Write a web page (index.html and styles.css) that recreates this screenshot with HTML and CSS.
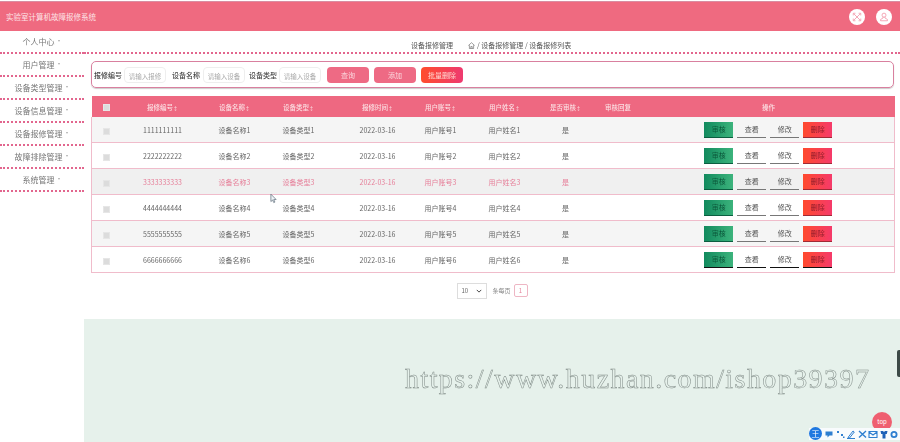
FILE: index.html
```html
<!DOCTYPE html>
<html lang="zh">
<head>
<meta charset="utf-8">
<title>实验室计算机故障报修系统</title>
<link rel="stylesheet" href="styles.css">
</head>
<body>
<div class="page">
  <header class="topbar">
    <div class="brand">实验室计算机故障报修系统</div>
    <div class="top-icons">
      <span class="round-icon"><svg viewBox="0 0 16 16" width="10" height="10"><path d="M3 3l10 10M13 3L3 13M2 5.500V2h3.500M10.500 2H14v3.500M14 10.500V14h-3.500M5.500 14H2v-3.500" fill="none" stroke="#f08ea0" stroke-width="1.200"/></svg></span>
      <span class="round-icon"><svg viewBox="0 0 16 16" width="10" height="10"><circle cx="8" cy="5" r="3.200" fill="none" stroke="#f08ea0" stroke-width="1.200"/><path d="M6.500 8v1.500L2.500 12v2h11v-2l-4-2.500V8" fill="none" stroke="#f08ea0" stroke-width="1.200"/></svg></span>
    </div>
  </header>
  <div class="layout">
    <nav class="sidebar">
      <a class="nav-item">个人中心<i class="caret"></i></a>
      <a class="nav-item">用户管理<i class="caret"></i></a>
      <a class="nav-item">设备类型管理<i class="caret"></i></a>
      <a class="nav-item">设备信息管理<i class="caret"></i></a>
      <a class="nav-item">设备报修管理<i class="caret"></i></a>
      <a class="nav-item">故障排除管理<i class="caret"></i></a>
      <a class="nav-item">系统管理<i class="caret"></i></a>
    </nav>
    <main class="main">
      <div class="crumbs">
        <span class="crumb-title">设备报修管理</span>
        <svg class="home" viewBox="0 0 10 10" width="7" height="7"><path d="M.5 5L5 1l4.500 4M2 4.500V9.500h6V4.500M4 9.500V6.500h2v3" fill="none" stroke="#555" stroke-width=".8"/></svg>
        <span class="crumb-path">/ 设备报修管理 / 设备报修列表</span>
      </div>
      <div class="content">
        <form class="search">
          <label class="search-label">报修编号</label>
          <span class="input">请输入报修</span>
          <label class="search-label label-wide">设备名称</label>
          <span class="input input-tight">请输入设备</span>
          <label class="search-label">设备类型</label>
          <span class="input">请输入设备</span>
          <span class="btn">查询</span>
          <span class="btn">添加</span>
          <span class="btn btn-danger">批量删除</span>
        </form>
        <table class="grid">
          <colgroup>
            <col class="c1"><col class="c2"><col class="c3"><col class="c4"><col class="c5"><col class="c2"><col class="c7"><col class="c8"><col class="c9"><col class="c10">
          </colgroup>
          <thead>
            <tr>
              <th><i class="check"></i></th>
              <th>报修编号<b>↕</b></th><th>设备名称<b>↕</b></th><th>设备类型<b>↕</b></th><th>报修时间<b>↕</b></th><th>用户账号<b>↕</b></th><th>用户姓名<b>↕</b></th><th>是否审核<b>↕</b></th><th>审核回复</th><th>操作</th>
            </tr>
          </thead>
          <tbody>
            <tr><td><i class="check"></i></td><td>1111111111</td><td>设备名称1</td><td>设备类型1</td><td>2022-03-16</td><td>用户账号1</td><td>用户姓名1</td><td>是</td><td></td><td><div class="ops"><span class="op op-green">审核</span><span class="op op-line">查看</span><span class="op op-line">修改</span><span class="op op-red">删除</span></div></td></tr>
            <tr><td><i class="check"></i></td><td>2222222222</td><td>设备名称2</td><td>设备类型2</td><td>2022-03-16</td><td>用户账号2</td><td>用户姓名2</td><td>是</td><td></td><td><div class="ops"><span class="op op-green">审核</span><span class="op op-line">查看</span><span class="op op-line">修改</span><span class="op op-red">删除</span></div></td></tr>
            <tr class="hover"><td><i class="check"></i></td><td>3333333333</td><td>设备名称3</td><td>设备类型3</td><td>2022-03-16</td><td>用户账号3</td><td>用户姓名3</td><td>是</td><td></td><td><div class="ops"><span class="op op-green">审核</span><span class="op op-line">查看</span><span class="op op-line">修改</span><span class="op op-red">删除</span></div></td></tr>
            <tr><td><i class="check"></i></td><td>4444444444</td><td>设备名称4</td><td>设备类型4</td><td>2022-03-16</td><td>用户账号4</td><td>用户姓名4</td><td>是</td><td></td><td><div class="ops"><span class="op op-green">审核</span><span class="op op-line">查看</span><span class="op op-line">修改</span><span class="op op-red">删除</span></div></td></tr>
            <tr><td><i class="check"></i></td><td>5555555555</td><td>设备名称5</td><td>设备类型5</td><td>2022-03-16</td><td>用户账号5</td><td>用户姓名5</td><td>是</td><td></td><td><div class="ops"><span class="op op-green">审核</span><span class="op op-line">查看</span><span class="op op-line">修改</span><span class="op op-red">删除</span></div></td></tr>
            <tr><td><i class="check"></i></td><td>6666666666</td><td>设备名称6</td><td>设备类型6</td><td>2022-03-16</td><td>用户账号6</td><td>用户姓名6</td><td>是</td><td></td><td><div class="ops"><span class="op op-green">审核</span><span class="op op-line">查看</span><span class="op op-line">修改</span><span class="op op-red">删除</span></div></td></tr>
          </tbody>
        </table>
        <div class="pager">
          <span class="select">10<svg viewBox="0 0 8 5" width="6" height="4"><path d="M1 1l3 3 3-3" fill="none" stroke="#444" stroke-width="1.300"/></svg></span>
          <span class="pager-text">条每页</span>
          <span class="page-num">1</span>
        </div>
      </div>
      <div class="band"></div>
    </main>
  </div>
  <div class="watermark">https://www.huzhan.com/ishop39397</div>
  <svg class="cursor" viewBox="0 0 8 12" width="7" height="11"><path d="M1 1v8.500l2-1.800 1.300 3 1.300-.6-1.300-2.900H7z" fill="#eef3f7" stroke="#5b6b78" stroke-width=".8"/></svg>
  <div class="side-tab"></div>
  <div class="to-top">top</div>
  <div class="imebar">
    <span class="ime-logo">王</span>
    <svg viewBox="0 0 78 10" width="78" height="10">
      <path d="M4.500 2.500h7v4h-3l-2 2v-2h-2z" fill="#2f7fd0"/>
      <path d="M16 2h2v2h-2zM20 5h2v2h-2zM22 7.500h1.500v1.500H22z" fill="#2f7fd0"/>
      <path d="M27 8.500L32 2l1.300 1L28.500 9zM26 9.500h8" fill="none" stroke="#2f7fd0" stroke-width="1"/>
      <path d="M38 2l7 6.500M45 2l-7 6.500" stroke="#2f7fd0" stroke-width="1.400"/>
      <path d="M48 2.500h8v6h-8zM48 3l4 3 4-3" fill="none" stroke="#2f7fd0" stroke-width="1.100"/>
      <path d="M59.500 2H62l1 1 1-1h2.500l-.7 3h-1.300v4.500h-3V5h-1.300z" fill="#1f62b8"/>
      <circle cx="73" cy="5.500" r="2.600" fill="none" stroke="#2f7fd0" stroke-width="1.800"/>
    </svg>
  </div>
</div>
</body>
</html>
```
FILE: styles.css
```css
* { box-sizing: border-box; }
html, body { margin: 0; padding: 0; background: #fff; }
.page {
  position: relative;
  width: 900px;
  height: 442px;
  overflow: hidden;
  display: flex;
  flex-direction: column;
  padding-top: 1px;
  font-family: "Noto Sans CJK SC", "Noto Sans", sans-serif;
  font-size: 7px;
  color: #666;
  filter: blur(.4px);
}
.topbar {
  flex: 0 0 30px;
  display: flex;
  align-items: center;
  justify-content: space-between;
  padding: 0 8px 0 6px;
  background: #ef6a80;
  border-top: 1px solid #d98da2;
}
.brand { font-size: 7.500px; color: #fde3e6; }
.top-icons { display: flex; gap: 11px; }
.round-icon {
  width: 16px;
  height: 16px;
  border-radius: 50%;
  background: #fff;
  display: flex;
  align-items: center;
  justify-content: center;
}
.layout { flex: 1; display: flex; min-height: 0; }
.sidebar { flex: 0 0 84px; }
.nav-item {
  height: 23px;
  display: flex;
  align-items: center;
  justify-content: center;
  padding-right: 2px;
  font-size: 8px;
  color: #777;
  border-bottom: 2px dotted #e2668e;
}
.caret {
  width: 0;
  height: 0;
  margin: 0 0 1px 3px;
  border-left: 1.500px solid transparent;
  border-right: 1.500px solid transparent;
  border-top: 2px solid #aaa;
}
.main { flex: 1; display: flex; flex-direction: column; min-width: 0; }
.crumbs {
  height: 23px;
  display: flex;
  align-items: flex-end;
  padding: 0 0 2px 327px;
  color: #555;
  border-bottom: 2px dotted #e2668e;
  line-height: 10px;
}
.crumb-title { width: 57px; }
.home { margin: 0 2px 1px 0; }
.content { padding: 7px 6px 0 7px; }
.search {
  height: 27px;
  display: flex;
  align-items: center;
  padding-left: 2px;
  border: 1px solid #d9809f;
  border-radius: 5px;
  box-shadow: 0 1px 1px #ccc;
}
.search-label { width: 30px; color: #444; font-weight: 500; white-space: nowrap; }
.label-wide { width: 31px; }
.input {
  width: 42px;
  height: 16px;
  margin-right: 6px;
  line-height: 16px;
  text-align: center;
  color: #aaa;
  font-size: 6.500px;
  white-space: nowrap;
  overflow: hidden;
  border: 1px solid #eee;
  border-radius: 4px;
}
.input-tight { margin-right: 4px; }
.btn {
  width: 42px;
  height: 16px;
  margin-right: 5px;
  line-height: 16px;
  text-align: center;
  color: #fbd5dc;
  background: #ee6a84;
  border-radius: 4px;
}
.btn-danger {
  background: linear-gradient(90deg, #ff4c2c, #ee3a70);
  color: #ffd9d2;
}
.grid {
  width: 803px;
  margin-top: 8px;
  table-layout: fixed;
  border-collapse: collapse;
}
.c1 { width: 43px; }
.c2 { width: 64px; }
.c3 { width: 68px; }
.c4 { width: 72px; }
.c5 { width: 70px; }
.c7 { width: 62px; }
.c8 { width: 57px; }
.c9 { width: 101px; }
.c10 { width: 202px; }
.grid th, .grid td { padding: 0; text-align: center; vertical-align: middle; white-space: nowrap; }
.grid th { height: 21px; background: #ee6881; color: #fbdfe3; font-weight: 500; font-size: 6.500px; }
.grid th b { font-weight: 400; font-size: 5px; }
.grid td { height: 26px; padding-top: 2px; color: #666; font-size: 7px; border-bottom: 1px solid #f0bccb; }
.grid tbody tr:first-child td { height: 25px; }
.grid tbody tr { border-left: 1px solid #f0bccb; border-right: 1px solid #f0bccb; }
.grid tbody tr:nth-child(odd) { background: #f5f5f5; }
.grid tbody tr.hover { background: #f0f0f0; }
.grid tbody tr.hover td { color: #e67f99; }
.grid tr > :nth-child(1) { padding-right: 13px; }
.grid tr > :nth-child(2) { padding-right: 8px; }
.grid tr > :nth-child(3) { padding-left: 4px; }
.grid tr > :nth-child(4) { padding-right: 8px; }
.grid tr > :nth-child(5) { padding-left: 8px; }
.grid tr > :nth-child(7) { padding-left: 2px; }
.grid tr > :nth-child(8) { padding-left: 5px; }
.grid tr > :nth-child(9) { padding-right: 48px; }
.grid tr > :nth-child(10) { padding-right: 50px; }
.check {
  display: inline-block;
  width: 7px;
  height: 7px;
  vertical-align: middle;
  background: #dcdcdc;
  border: 1px solid #e6e6e6;
}
.ops { display: flex; justify-content: center; gap: 4px; }
.op {
  width: 29px;
  height: 16px;
  line-height: 15px;
  text-align: center;
  color: #555;
  border-bottom: 1.500px solid #777;
}
.grid tbody tr.hover td .op { color: #555; }
.grid tbody tr:last-child .op { border-bottom-color: #111; }
.op.op-green { background: linear-gradient(90deg, #128a5e, #3cb37c); color: #0d5a3c; border-bottom-color: #0b5e40; }
.op.op-red { background: linear-gradient(90deg, #ff4a2e, #f53a6a); color: #8d1c2a; border-bottom-color: #a02a35; }
.grid tbody tr.hover td .op-green { color: #0d5a3c; }
.grid tbody tr.hover td .op-red { color: #8d1c2a; }
.pager {
  display: flex;
  align-items: center;
  justify-content: center;
  gap: 5px;
  margin-top: 10px;
  height: 16px;
  font-size: 6px;
  color: #888;
}
.select {
  width: 30px;
  height: 16px;
  display: flex;
  align-items: center;
  justify-content: space-between;
  padding: 0 4px 0 3px;
  border: 1px solid #ddd;
  color: #666;
}
.page-num {
  width: 14px;
  height: 13px;
  margin-left: -2px;
  line-height: 11px;
  text-align: center;
  color: #e57f98;
  border: 1px solid #eeb6c4;
  border-radius: 2px;
}
.band { flex: 1; margin-top: 20px; background: #e6f1eb; }
.watermark {
  position: absolute;
  left: 405px;
  top: 364px;
  font-family: "Liberation Serif", serif;
  font-size: 28px;
  letter-spacing: 1.430px;
  line-height: 30px;
  white-space: nowrap;
  color: transparent;
  -webkit-text-stroke: .5px #7f8a86;
}
.cursor { position: absolute; left: 270px; top: 193px; }
.side-tab {
  position: absolute;
  right: 0;
  top: 350px;
  width: 3px;
  height: 27px;
  background: #3d4a47;
  border-radius: 2px 0 0 2px;
}
.to-top {
  position: absolute;
  left: 872px;
  top: 412px;
  width: 20px;
  height: 20px;
  border-radius: 50%;
  background: #ef5f70;
  color: #fff;
  font-size: 6px;
  line-height: 20px;
  text-align: center;
}
.imebar {
  position: absolute;
  left: 809px;
  top: 428px;
  width: 91px;
  height: 12px;
  display: flex;
  align-items: center;
  padding-left: 12px;
  background: #f8fbfd;
}
.ime-logo {
  position: absolute;
  left: 0;
  top: -1px;
  width: 13px;
  height: 13px;
  border-radius: 50%;
  background: #1f78e0;
  color: #fff;
  font-size: 8px;
  line-height: 13px;
  text-align: center;
}
```
